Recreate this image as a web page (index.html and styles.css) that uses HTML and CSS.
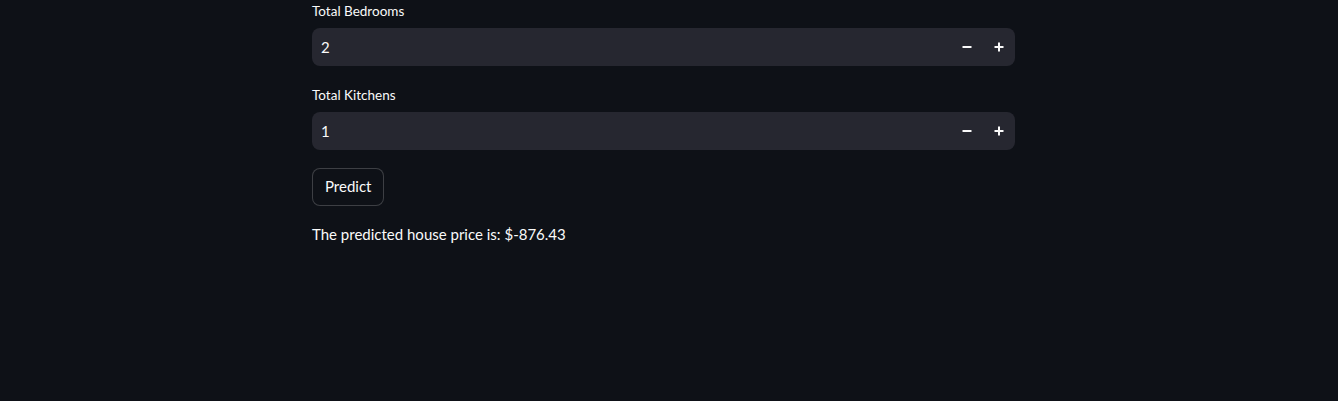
FILE: index.html
```html
<!DOCTYPE html>
<html lang="en">
<head>
<meta charset="utf-8">
<title>House Price Prediction</title>
<link rel="stylesheet" href="styles.css">
</head>
<body>
<main class="app">
  <div class="block">
    <div class="field">
      <label class="label">Total Bedrooms</label>
      <div class="number-input">
        <span class="value">2</span>
        <button class="step" aria-label="decrement"><svg width="10" height="10" viewBox="0 0 10 10"><rect x="0.5" y="4" width="9" height="2" fill="#fafafa"/></svg></button>
        <button class="step" aria-label="increment"><svg width="10" height="10" viewBox="0 0 10 10"><rect x="0.5" y="4" width="9" height="2" fill="#fafafa"/><rect x="4" y="0.5" width="2" height="9" fill="#fafafa"/></svg></button>
      </div>
    </div>
    <div class="field">
      <label class="label">Total Kitchens</label>
      <div class="number-input">
        <span class="value">1</span>
        <button class="step" aria-label="decrement"><svg width="10" height="10" viewBox="0 0 10 10"><rect x="0.5" y="4" width="9" height="2" fill="#fafafa"/></svg></button>
        <button class="step" aria-label="increment"><svg width="10" height="10" viewBox="0 0 10 10"><rect x="0.5" y="4" width="9" height="2" fill="#fafafa"/><rect x="4" y="0.5" width="2" height="9" fill="#fafafa"/></svg></button>
      </div>
    </div>
    <div class="actions">
      <button class="predict">Predict</button>
    </div>
    <p class="result">The predicted house price is: $-876.43</p>
  </div>
</main>
</body>
</html>
```
FILE: styles.css
```css
html, body {
  margin: 0;
  padding: 0;
  background: #0e1117;
  color: #fafafa;
  font-family: Lato, "Noto Sans", sans-serif;
}
.app {
  display: flex;
  justify-content: center;
  width: 1338px;
  height: 401px;
}
.block {
  width: 703px;
  margin-left: -11px;
  display: flex;
  flex-direction: column;
  gap: 18px;
}
.field {
  display: flex;
  flex-direction: column;
}
.label {
  font-size: 13.5px;
  line-height: 22px;
  height: 22px;
  margin-bottom: 6px;
}
.number-input {
  display: flex;
  align-items: center;
  height: 38px;
  background: #262730;
  border-radius: 8px;
}
.value {
  flex: 1;
  padding-left: 9px;
  font-size: 15px;
}
.step {
  width: 32px;
  height: 38px;
  border: none;
  background: transparent;
  display: flex;
  align-items: center;
  justify-content: center;
  padding: 0;
}
.actions {
  display: flex;
}
.predict {
  height: 38px;
  padding: 0 12px 2px;
  background: #0e1117;
  color: #fafafa;
  border: 1px solid rgba(250, 250, 250, 0.2);
  border-radius: 8px;
  font-family: inherit;
  font-size: 15px;
}
.result {
  margin: -2px 0 0;
  font-size: 15px;
  line-height: 24px;
}
```
